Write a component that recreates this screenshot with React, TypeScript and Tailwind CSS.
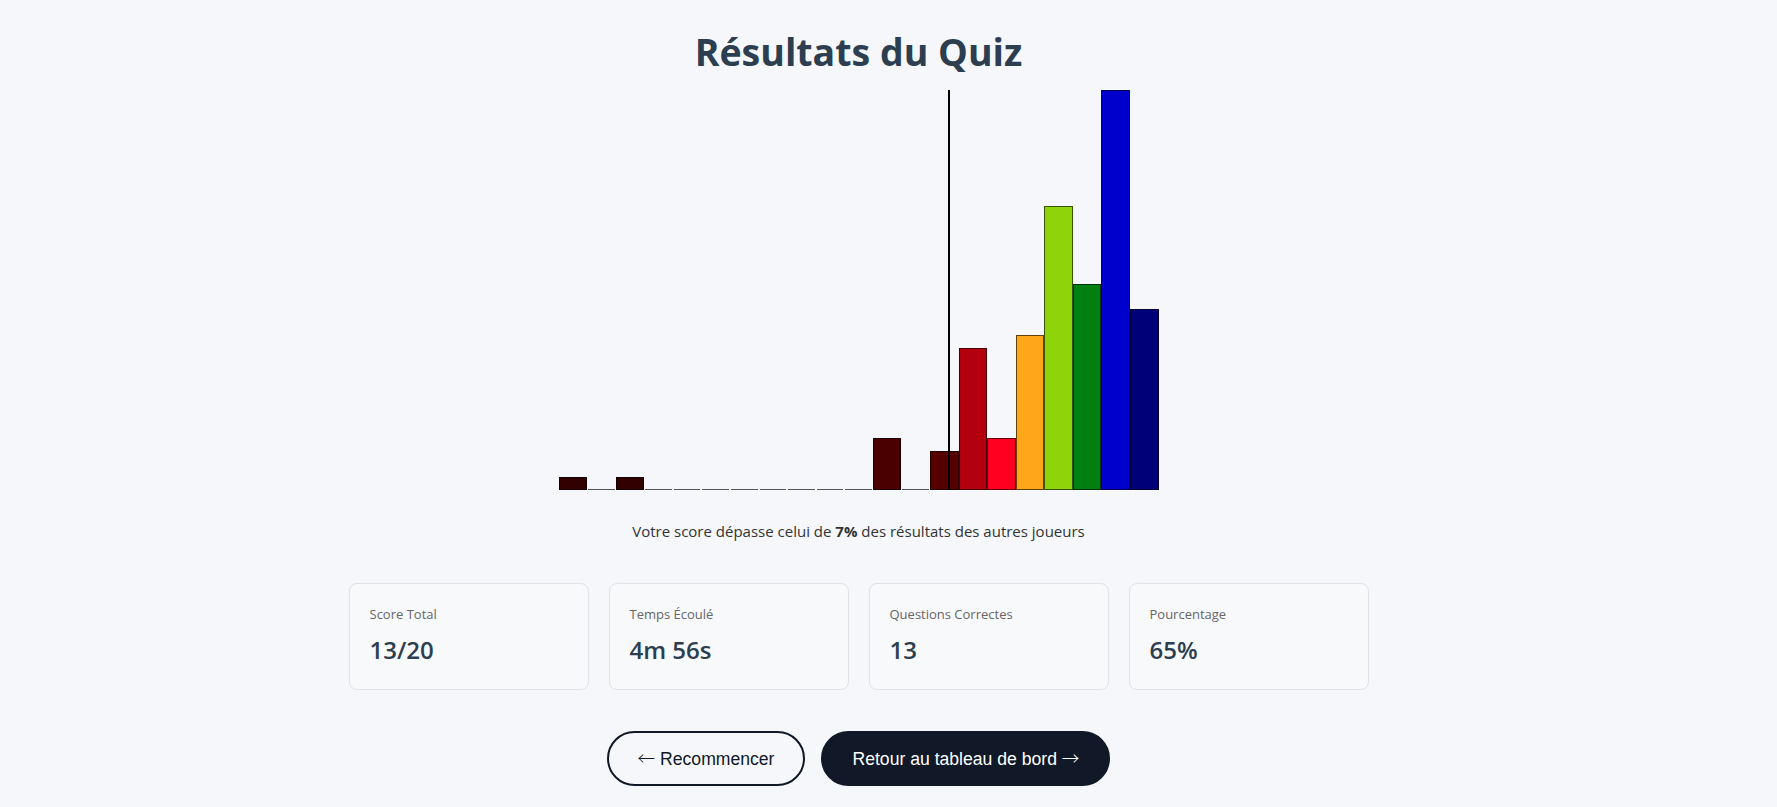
import React from 'react';

type Bin = { count: number; color: string };

// distribution of scores 0..20
const BINS: Bin[] = [
  { count: 1, color: '#330000' },
  { count: 0, color: '#330000' },
  { count: 1, color: '#330000' },
  { count: 0, color: '#3a0000' },
  { count: 0, color: '#3a0000' },
  { count: 0, color: '#3a0000' },
  { count: 0, color: '#3f0000' },
  { count: 0, color: '#3f0000' },
  { count: 0, color: '#440000' },
  { count: 0, color: '#440000' },
  { count: 0, color: '#480000' },
  { count: 4, color: '#4a0000' },
  { count: 0, color: '#500000' },
  { count: 3, color: '#560000' },
  { count: 11, color: '#b3000f' },
  { count: 4, color: '#ff0020' },
  { count: 12, color: '#ffa619' },
  { count: 22, color: '#8fd40a' },
  { count: 16, color: '#008011' },
  { count: 31, color: '#0000cc' },
  { count: 14, color: '#000078' },
];

const STATS = [
  { label: 'Score Total', value: '13/20' },
  { label: 'Temps Écoulé', value: '4m 56s' },
  { label: 'Questions Correctes', value: '13' },
  { label: 'Pourcentage', value: '65%' },
];

const CHART_H = 400;

function Histogram({ percent }: { percent: number }) {
  const max = Math.max(...BINS.map((b) => b.count));
  return (
    <div className="relative flex h-[400px] w-[600px] items-end">
      {BINS.map((b, i) => (
        <div key={i} className="flex h-full flex-1 items-end">
          {b.count > 0 ? (
            <div
              className="w-full border border-black/60"
              style={{ height: (b.count / max) * CHART_H, backgroundColor: b.color }}
            />
          ) : (
            <div className="mx-px h-px w-full bg-[#555]" />
          )}
        </div>
      ))}
      <div
        className="absolute top-0 bottom-0 w-[2px] -translate-x-1/2 bg-black"
        style={{ left: `${percent}%` }}
      />
    </div>
  );
}

export default function App() {
  return (
    <div className="min-h-screen bg-[#f5f7fa] pr-[60px] font-['Open_Sans','Noto_Sans',sans-serif]">
      <div className="flex flex-col items-center pt-[29px]">
        <h1 className="mb-[16px] text-[37.5px] leading-[1.2] font-bold text-[#2c3e50]">Résultats du Quiz</h1>

        <Histogram percent={65} />

        <p className="mt-[30px] text-[15px] leading-[1.5] text-[#333]">
          Votre score dépasse celui de <strong className="font-bold">7%</strong> des résultats des autres joueurs
        </p>

        <div className="mt-[40px] grid w-[1020px] grid-cols-4 gap-5">
          {STATS.map((s) => (
            <div
              key={s.label}
              className="rounded-lg border border-[#e1e3e8] bg-[#f8f9fb] px-5 pt-[21px] pb-[21px]"
            >
              <div className="text-[13px] leading-[1.5] text-[#666]">{s.label}</div>
              <div className="mt-2 text-[24px] leading-[1.5] font-semibold text-[#2c3e50]">{s.value}</div>
            </div>
          ))}
        </div>

        <div className="mt-[41px] flex gap-4 font-['Liberation_Sans',Arial,sans-serif] text-[17.6px]">
          <button className="rounded-full border-2 border-[#111827] px-[29px] py-[15px] leading-[1.15] text-[#111827]">
            <span className="font-['Noto_Sans_CJK_SC',sans-serif] font-light">←</span> Recommencer
          </button>
          <button className="rounded-full border-2 border-[#111827] bg-[#111827] px-[29px] py-[15px] leading-[1.15] text-white">
            Retour au tableau de bord <span className="font-['Noto_Sans_CJK_SC',sans-serif] font-light">→</span>
          </button>
        </div>
      </div>
    </div>
  );
}
